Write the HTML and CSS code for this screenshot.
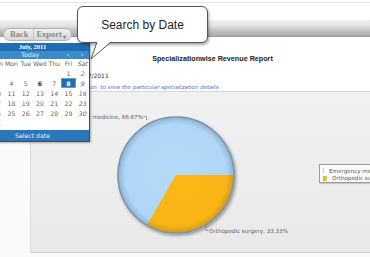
FILE: index.html
```html
<!DOCTYPE html>
<html lang="en">
<head>
  <meta charset="UTF-8" />
  <title>Specializationwise Revenue Report</title>
  <link rel="stylesheet" href="styles.css">
</head>
<body>
  <div class="topbar"></div>

  <div class="toolbar">
    <div class="btn-group">
      <span class="btn">Back</span>
      <span class="btn">Export<span class="caret">&#9662;</span></span>
    </div>
  </div>

  <div class="report-head">
    <h1 class="report-title">Specializationwise Revenue Report</h1>
    <p class="report-date">Date : 08/07/2011</p>
    <p class="report-hint">Click on the specialization&nbsp; to view the particular specialization details</p>
  </div>

  <div class="chart-area">
    <div class="chart-panel">
      <svg class="pie" viewBox="30 93 340 161" width="340" height="161">
        <defs>
          <radialGradient id="blueFill" cx="176" cy="176" r="58" gradientUnits="userSpaceOnUse">
            <stop offset="0" stop-color="#b6dbf9" />
            <stop offset="0.88" stop-color="#afd6f6" />
            <stop offset="1" stop-color="#8fb3d2" />
          </radialGradient>
          <radialGradient id="orangeFill" cx="176" cy="176" r="58" gradientUnits="userSpaceOnUse">
            <stop offset="0" stop-color="#fcb914" />
            <stop offset="0.88" stop-color="#f9b413" />
            <stop offset="1" stop-color="#d39a1c" />
          </radialGradient>
          <filter id="pieShadow" x="-20%" y="-20%" width="140%" height="140%">
            <feDropShadow dx="1.5" dy="2" stdDeviation="1.5" flood-color="#000" flood-opacity="0.35" />
          </filter>
        </defs>
        <g filter="url(#pieShadow)">
          <path d="M176 176 L147 226.2 A58 58 0 1 1 234 176 Z" fill="url(#blueFill)" />
          <path d="M176 176 L234 176 A58 58 0 0 1 147 226.2 Z" fill="url(#orangeFill)" />
          <circle cx="176" cy="176" r="58" fill="none" stroke="#7e93a6" stroke-width="1.6" />
        </g>
        <polyline points="143.5,117.5 146.5,117.5 146.5,121" fill="none" stroke="#777" stroke-width="0.7" />
        <polyline points="206,226 206,231.5 208.5,231.5" fill="none" stroke="#777" stroke-width="0.7" />
        <text class="pie-label" x="143" y="120" text-anchor="end">Emergency medicine, 66.67%</text>
        <text class="pie-label" x="209" y="234">Orthopedic surgery, 33.33%</text>
      </svg>

      <div class="legend">
        <div class="legend-item"><span class="swatch swatch-blue"></span>Emergency medicine</div>
        <div class="legend-item"><span class="swatch swatch-orange"></span>Orthopedic surgery</div>
      </div>
    </div>
  </div>

  <div class="calendar">
    <div class="cal-title">July, 2011</div>
    <div class="cal-nav">
      <span class="cal-today">Today</span>
      <span class="cal-arrow">&lsaquo;</span>
      <span class="cal-arrow">&rsaquo;</span>
    </div>
    <div class="cal-grid">
      <span>Sun</span><span>Mon</span><span>Tue</span><span>Wed</span><span>Thu</span><span>Fri</span><span class="sat">Sat</span>
      <span></span><span></span><span></span><span></span><span></span><span>1</span><span class="sat">2</span>
      <span>3</span><span>4</span><span>5</span><span class="today">6</span><span>7</span><span class="selected">8</span><span class="sat">9</span>
      <span>10</span><span>11</span><span>12</span><span>13</span><span>14</span><span>15</span><span class="sat">16</span>
      <span>17</span><span>18</span><span>19</span><span>20</span><span>21</span><span>22</span><span class="sat">23</span>
      <span>24</span><span>25</span><span>26</span><span>27</span><span>28</span><span>29</span><span class="sat">30</span>
      <span>31</span><span></span><span></span><span></span><span></span><span></span><span></span>
    </div>
    <div class="cal-footer">Select date</div>
  </div>

  <div class="callout">Search by Date</div>
  <svg class="callout-tail" width="28" height="22" viewBox="0 0 28 22">
    <polygon points="9,1.5 23,1.5 3,19" fill="#fff" />
    <polyline points="9,2 3,19 23,2" fill="none" stroke="#555" stroke-width="1" />
  </svg>
</body>
</html>
```

FILE: styles.css
```css
body {
  margin: 0;
  width: 370px;
  height: 257px;
  overflow: hidden;
  position: relative;
  background: #fff;
  font-family: "DejaVu Sans", Verdana, sans-serif;
}
.topbar {
  height: 20px;
  background: linear-gradient(#fff 0 2px, #e6e6e6 2px 3px, #fff 3px);
}
.toolbar {
  height: 17px;
  box-sizing: border-box;
  padding: 2px 0 0 3px;
  background: linear-gradient(#efefef 0%, #e4e4e4 35%, #c9c9c9 60%, #a8a8a8 100%);
  border-bottom: 1px solid #9c9c9c;
}
.btn-group {
  display: inline-flex;
  height: 13px;
  border: 1px solid #b3b3b3;
  border-radius: 7px;
  background: linear-gradient(#f0f0f0, #d6d6d6);
  box-sizing: border-box;
  overflow: hidden;
}
.btn {
  display: flex;
  align-items: center;
  padding: 0 5px 0 6px;
  font-family: "Liberation Serif", serif;
  font-weight: bold;
  font-size: 8.5px;
  color: #8a8a8a;
}
.btn + .btn {
  border-left: 1px solid #c2c2c2;
  padding: 0 5px 0 2px;
}
.caret {
  font-size: 6px;
  margin-top: 4px;
  margin-left: 1px;
}
.report-head {
  height: 55px;
  box-sizing: border-box;
  padding-top: 17px;
  border-bottom: 1px solid #d6d6d6;
}
.report-title {
  margin: 0;
  padding-left: 55px;
  text-align: center;
  font-family: "Liberation Sans", Arial, sans-serif;
  font-size: 7.2px;
  font-weight: bold;
  color: #222;
}
.report-date {
  margin: 9px 0 0 54px;
  font-size: 6px;
  color: #333;
}
.report-hint {
  margin: 5px 0 0 25px;
  font-size: 5.5px;
  font-style: italic;
  color: #3d6fd6;
  white-space: pre;
}
.chart-area {
  height: 165px;
  background: #fafafa;
}
.chart-panel {
  position: relative;
  margin-left: 30px;
  height: 161px;
  box-sizing: border-box;
  background: linear-gradient(#f1f1f1, #e9e9e9);
  border-left: 1px solid #dcdcdc;
  border-bottom: 1px solid #cfcfcf;
}
.pie {
  display: block;
  margin-left: -1px;
}
.pie-label {
  font-family: "DejaVu Sans", Verdana, sans-serif;
  font-size: 5.6px;
  fill: #5a5a5a;
}
.legend {
  position: absolute;
  left: 288px;
  top: 72px;
  width: 70px;
  height: 19px;
  box-sizing: border-box;
  padding: 2px 0 0 3px;
  background: #fbfbfb;
  border: 1px solid #9a9a9a;
  box-shadow: 1px 1px 1px rgba(0, 0, 0, 0.15);
}
.legend-item {
  display: flex;
  align-items: center;
  height: 7.5px;
  font-size: 5.6px;
  color: #555;
  white-space: nowrap;
}
.swatch {
  width: 4px;
  height: 5px;
  margin-right: 5px;
}
.swatch-blue {
  background: linear-gradient(90deg, #8fc3ee, #d3eafc);
}
.swatch-orange {
  background: linear-gradient(90deg, #f0a600, #fcd060);
}
.calendar {
  position: absolute;
  left: -11px;
  top: 43px;
  width: 101px;
  box-sizing: border-box;
  background: #fff;
  border: 1px solid #4a4a4a;
  border-top: 0;
  box-shadow: 1px 1px 2px rgba(0, 0, 0, 0.3);
  font-size: 6.2px;
  color: #666;
}
.cal-title {
  height: 8px;
  line-height: 8px;
  padding-right: 14px;
  text-align: center;
  background: #1f6db2;
  color: #fff;
  font-family: "Liberation Serif", serif;
  font-weight: bold;
  font-size: 6.5px;
}
.cal-nav {
  display: flex;
  height: 8px;
  line-height: 8px;
  background: #3b8bcc;
  color: #e8f2fb;
}
.cal-today {
  width: 71px;
  padding-left: 10px;
  box-sizing: border-box;
  text-align: center;
}
.cal-arrow {
  width: 14.3px;
  text-align: center;
}
.cal-grid {
  display: grid;
  grid-template-columns: repeat(7, 14.28px);
  grid-auto-rows: 10px;
  margin-top: -1px;
  padding-bottom: 2px;
}
.cal-grid span {
  display: flex;
  align-items: center;
  justify-content: center;
}
.cal-grid .sat {
  font-style: italic;
}
.cal-grid .today {
  font-weight: bold;
  color: #333;
}
.cal-grid .selected {
  background: #1f6db2;
  color: #fff;
  font-weight: bold;
  box-shadow: inset 0 0 0 1px #5ca0da;
}
.cal-footer {
  height: 11px;
  line-height: 11px;
  padding-right: 14px;
  text-align: center;
  background: #2a78bc;
  color: #eaf3fb;
}
.callout {
  position: absolute;
  left: 77px;
  top: 6px;
  width: 131px;
  height: 37px;
  box-sizing: border-box;
  display: flex;
  align-items: center;
  justify-content: center;
  background: #fff;
  border: 1px solid #555;
  border-radius: 6px;
  box-shadow: 1px 2px 3px rgba(0, 0, 0, 0.35);
  font-family: "Liberation Sans", Arial, sans-serif;
  font-size: 12px;
  color: #1e1e1e;
}
.callout-tail {
  position: absolute;
  left: 88px;
  top: 40px;
}
```
